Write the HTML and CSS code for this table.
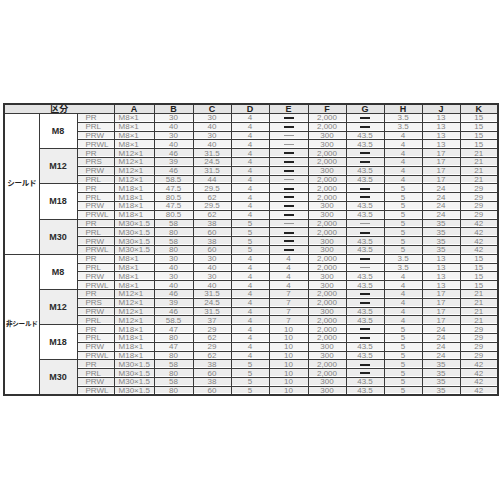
FILE: index.html
```html
<!DOCTYPE html>
<html lang="ja">
<head>
<meta charset="utf-8">
<link rel="stylesheet" href="styles.css">
</head>
<body>
<div class="wrap">
<table class="spec">
<colgroup>
<col class="c35"><col class="c38"><col class="c37"><col class="c40"><col class="c39"><col class="c38"><col class="c38"><col class="c39"><col class="c38"><col class="c38"><col class="c38"><col class="c38"><col class="c38">
</colgroup>
<thead>
<tr><th colspan="3">区分</th><th>A</th><th>B</th><th>C</th><th>D</th><th>E</th><th>F</th><th>G</th><th>H</th><th>J</th><th>K</th></tr>
</thead>
<tbody>
<tr><td rowspan="16" class="cat">シールド</td><td rowspan="4" class="grp">M8</td><td class="t">PR</td><td class="a">M8×1</td><td>30</td><td>30</td><td>4</td><td><span class="dash"></span></td><td>2,000</td><td><span class="dash"></span></td><td>3.5</td><td>13</td><td>15</td></tr>
<tr><td class="t">PRL</td><td class="a">M8×1</td><td>40</td><td>40</td><td>4</td><td><span class="dash"></span></td><td>2,000</td><td><span class="dash"></span></td><td>3.5</td><td>13</td><td>15</td></tr>
<tr><td class="t">PRW</td><td class="a">M8×1</td><td>30</td><td>30</td><td>4</td><td><span class="dash lt"></span></td><td>300</td><td>43.5</td><td>4</td><td>13</td><td>15</td></tr>
<tr><td class="t">PRWL</td><td class="a">M8×1</td><td>40</td><td>40</td><td>4</td><td><span class="dash lt"></span></td><td>300</td><td>43.5</td><td>4</td><td>13</td><td>15</td></tr>
<tr class="g"><td rowspan="4" class="grp gg">M12</td><td class="t">PR</td><td class="a">M12×1</td><td>46</td><td>31.5</td><td>4</td><td><span class="dash"></span></td><td>2,000</td><td><span class="dash"></span></td><td>4</td><td>17</td><td>21</td></tr>
<tr class="g"><td class="t">PRS</td><td class="a">M12×1</td><td>39</td><td>24.5</td><td>4</td><td><span class="dash"></span></td><td>2,000</td><td><span class="dash"></span></td><td>4</td><td>17</td><td>21</td></tr>
<tr class="g"><td class="t">PRW</td><td class="a">M12×1</td><td>46</td><td>31.5</td><td>4</td><td><span class="dash"></span></td><td>300</td><td>43.5</td><td>4</td><td>17</td><td>21</td></tr>
<tr class="g"><td class="t">PRL</td><td class="a">M12×1</td><td>58.5</td><td>44</td><td>4</td><td><span class="dash lt"></span></td><td>2,000</td><td>43.5</td><td>4</td><td>17</td><td>21</td></tr>
<tr><td rowspan="4" class="grp">M18</td><td class="t">PR</td><td class="a">M18×1</td><td>47.5</td><td>29.5</td><td>4</td><td><span class="dash"></span></td><td>2,000</td><td><span class="dash"></span></td><td>5</td><td>24</td><td>29</td></tr>
<tr><td class="t">PRL</td><td class="a">M18×1</td><td>80.5</td><td>62</td><td>4</td><td><span class="dash"></span></td><td>2,000</td><td><span class="dash"></span></td><td>5</td><td>24</td><td>29</td></tr>
<tr><td class="t">PRW</td><td class="a">M18×1</td><td>47.5</td><td>29.5</td><td>4</td><td><span class="dash"></span></td><td>300</td><td>43.5</td><td>5</td><td>24</td><td>29</td></tr>
<tr><td class="t">PRWL</td><td class="a">M18×1</td><td>80.5</td><td>62</td><td>4</td><td><span class="dash"></span></td><td>300</td><td>43.5</td><td>5</td><td>24</td><td>29</td></tr>
<tr class="g"><td rowspan="4" class="grp gg">M30</td><td class="t">PR</td><td class="a">M30×1.5</td><td>58</td><td>38</td><td>5</td><td><span class="dash lt"></span></td><td>2,000</td><td><span class="dash lt"></span></td><td>5</td><td>35</td><td>42</td></tr>
<tr class="g"><td class="t">PRL</td><td class="a">M30×1.5</td><td>80</td><td>60</td><td>5</td><td><span class="dash"></span></td><td>2,000</td><td><span class="dash"></span></td><td>5</td><td>35</td><td>42</td></tr>
<tr class="g"><td class="t">PRW</td><td class="a">M30×1.5</td><td>58</td><td>38</td><td>5</td><td><span class="dash"></span></td><td>300</td><td>43.5</td><td>5</td><td>35</td><td>42</td></tr>
<tr class="g"><td class="t">PRWL</td><td class="a">M30×1.5</td><td>80</td><td>60</td><td>5</td><td><span class="dash"></span></td><td>300</td><td>43.5</td><td>5</td><td>35</td><td>42</td></tr>

<tr><td rowspan="16" class="cat narrow">非シールド</td><td rowspan="4" class="grp">M8</td><td class="t">PR</td><td class="a">M8×1</td><td>30</td><td>30</td><td>4</td><td>4</td><td>2,000</td><td><span class="dash"></span></td><td>3.5</td><td>13</td><td>15</td></tr>
<tr><td class="t">PRL</td><td class="a">M8×1</td><td>40</td><td>40</td><td>4</td><td>4</td><td>2,000</td><td><span class="dash lt"></span></td><td>3.5</td><td>13</td><td>15</td></tr>
<tr><td class="t">PRW</td><td class="a">M8×1</td><td>30</td><td>30</td><td>4</td><td>4</td><td>300</td><td>43.5</td><td>4</td><td>13</td><td>15</td></tr>
<tr><td class="t">PRWL</td><td class="a">M8×1</td><td>40</td><td>40</td><td>4</td><td>4</td><td>300</td><td>43.5</td><td>4</td><td>13</td><td>15</td></tr>
<tr class="g"><td rowspan="4" class="grp gg">M12</td><td class="t">PR</td><td class="a">M12×1</td><td>46</td><td>31.5</td><td>4</td><td>7</td><td>2,000</td><td><span class="dash"></span></td><td>4</td><td>17</td><td>21</td></tr>
<tr class="g"><td class="t">PRS</td><td class="a">M12×1</td><td>39</td><td>24.5</td><td>4</td><td>7</td><td>2,000</td><td><span class="dash"></span></td><td>4</td><td>17</td><td>21</td></tr>
<tr class="g"><td class="t">PRW</td><td class="a">M12×1</td><td>46</td><td>31.5</td><td>4</td><td>7</td><td>300</td><td>43.5</td><td>4</td><td>17</td><td>21</td></tr>
<tr class="g"><td class="t">PRL</td><td class="a">M12×1</td><td>58.5</td><td>37</td><td>4</td><td>7</td><td>2,000</td><td>43.5</td><td>4</td><td>17</td><td>21</td></tr>
<tr><td rowspan="4" class="grp">M18</td><td class="t">PR</td><td class="a">M18×1</td><td>47</td><td>29</td><td>4</td><td>10</td><td>2,000</td><td><span class="dash"></span></td><td>5</td><td>24</td><td>29</td></tr>
<tr><td class="t">PRL</td><td class="a">M18×1</td><td>80</td><td>62</td><td>4</td><td>10</td><td>2,000</td><td><span class="dash"></span></td><td>5</td><td>24</td><td>29</td></tr>
<tr><td class="t">PRW</td><td class="a">M18×1</td><td>47</td><td>29</td><td>4</td><td>10</td><td>300</td><td>43.5</td><td>5</td><td>24</td><td>29</td></tr>
<tr><td class="t">PRWL</td><td class="a">M18×1</td><td>80</td><td>62</td><td>4</td><td>10</td><td>300</td><td>43.5</td><td>5</td><td>24</td><td>29</td></tr>
<tr class="g"><td rowspan="4" class="grp gg">M30</td><td class="t">PR</td><td class="a">M30×1.5</td><td>58</td><td>38</td><td>5</td><td>10</td><td>2,000</td><td><span class="dash"></span></td><td>5</td><td>35</td><td>42</td></tr>
<tr class="g"><td class="t">PRL</td><td class="a">M30×1.5</td><td>80</td><td>60</td><td>5</td><td>10</td><td>2,000</td><td><span class="dash"></span></td><td>5</td><td>35</td><td>42</td></tr>
<tr class="g"><td class="t">PRW</td><td class="a">M30×1.5</td><td>58</td><td>38</td><td>5</td><td>10</td><td>300</td><td>43.5</td><td>5</td><td>35</td><td>42</td></tr>
<tr class="g"><td class="t">PRWL</td><td class="a">M30×1.5</td><td>80</td><td>60</td><td>5</td><td>10</td><td>300</td><td>43.5</td><td>5</td><td>35</td><td>42</td></tr>
</tbody>
</table>
</div>
</body>
</html>
```
FILE: styles.css
```css
html, body {
  margin: 0;
  padding: 0;
  background: #ffffff;
  font-family: "Liberation Sans", "Noto Sans CJK JP", sans-serif;
}

.wrap {
  padding: 103px 3px 0 3px;
}

.spec {
  border-collapse: collapse;
  table-layout: fixed;
  width: 494px;
  border: 2px solid #333333;
}

.c35 { width: 35px; }
.c37 { width: 37px; }
.c38 { width: 38px; }
.c39 { width: 39px; }
.c40 { width: 40px; }

.spec th,
.spec td {
  border: 1px solid #3a3a3a;
  padding: 0;
  text-align: center;
  vertical-align: middle;
  white-space: nowrap;
  overflow: hidden;
}

.spec thead tr {
  height: 9px;
}

.spec th {
  background: #e4e4e4;
  color: #222222;
  font-size: 9px;
  line-height: 8px;
  font-weight: bold;
}

.spec tbody tr {
  height: 8.8px;
}

.spec td {
  background: #f4f4f4;
  color: #858585;
  font-size: 8px;
  line-height: 7px;
  box-shadow: inset 0 -1px 0 #ffffff;
}

.spec tr.g td {
  background: #ececec;
}

.spec td.t {
  text-align: left;
  padding-left: 8px;
}

.spec td.a {
  text-align: left;
  padding-left: 4px;
}

.spec td.cat {
  background: #ffffff;
  box-shadow: none;
  color: #222222;
  font-weight: bold;
  font-size: 7.5px;
  line-height: 10px;
  letter-spacing: -0.2px;
}

.spec td.cat.narrow {
  font-size: 6.6px;
  letter-spacing: -0.3px;
}

.spec td.grp {
  background: #ffffff;
  box-shadow: none;
  color: #2a2a2a;
  font-weight: bold;
  font-size: 9px;
  line-height: 10px;
}

.spec tr.g td.grp.gg {
  background: #eeeeee;
}

.dash {
  display: inline-block;
  width: 10px;
  height: 2px;
  background: #222222;
  vertical-align: middle;
}

.dash.lt {
  height: 1px;
  background: #9a9a9a;
}
```
